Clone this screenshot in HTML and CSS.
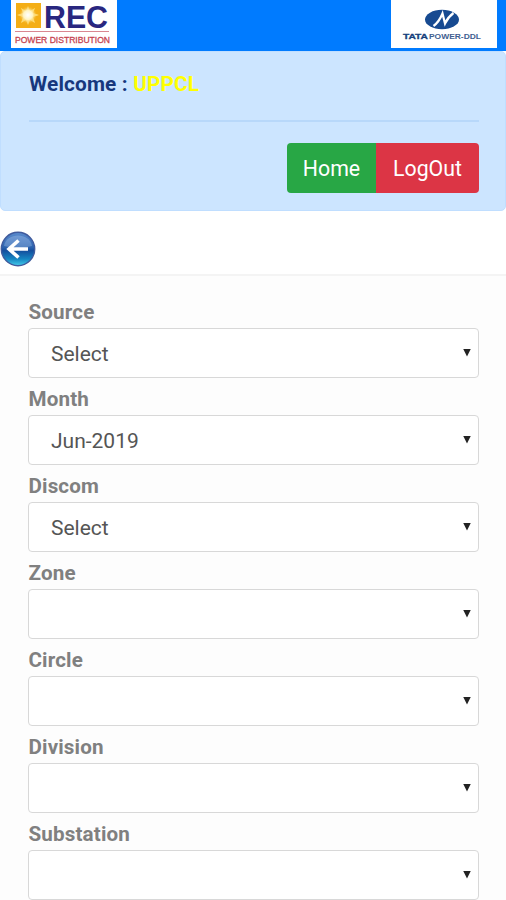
FILE: index.html
```html
<!DOCTYPE html>
<html lang="en">
<head>
<meta charset="utf-8">
<title>Power Distribution</title>
<link rel="stylesheet" href="styles.css">
</head>
<body>
<header class="topbar">
  <svg class="logo-rec" viewBox="0 0 106 48" role="img" aria-label="REC Power Distribution">
    <defs>
      <radialGradient id="sun"><stop offset="0" stop-color="#fff"/><stop offset=".5" stop-color="#fff4c4"/><stop offset="1" stop-color="#f5b824" stop-opacity="0"/></radialGradient>
    </defs>
    <rect width="106" height="48" fill="#fff"/>
    <rect x="5" y="3" width="25" height="25" fill="#f4ae16"/>
    <path d="M17 6l2 5 5-3-2 5 6 2-6 2 2 6-5-3-2 5-2-5-5 3 2-6-6-2 6-2-2-5 5 3z" fill="#ffe07e"/>
    <circle cx="17" cy="15" r="9" fill="url(#sun)"/>
    <text class="rec-name" x="33" y="27.500" textLength="64" lengthAdjust="spacingAndGlyphs">REC</text>
    <path d="M4 31.500h94" stroke="#d98791"/>
    <text class="rec-sub" x="4" y="42.500" textLength="95" lengthAdjust="spacingAndGlyphs">POWER DISTRIBUTION</text>
  </svg>
  <svg class="logo-tata" viewBox="0 0 106 48" role="img" aria-label="Tata Power-DDL">
    <rect width="106" height="48" fill="#fff"/>
    <ellipse cx="51" cy="19.500" rx="17" ry="9.700" fill="#174a91"/>
    <path d="M42.500 26Q48 22 51.500 13.500L54 23.500Q57 17 62.500 13" fill="none" stroke="#fff" stroke-width="2.200"/>
    <text class="tata-name" x="12" y="39" textLength="25" lengthAdjust="spacingAndGlyphs">TATA</text>
    <text class="tata-sub" x="38" y="39" textLength="52" lengthAdjust="spacingAndGlyphs">POWER-DDL</text>
  </svg>
</header>
<section class="welcome">
  <h1 class="greeting">Welcome : <span class="user">UPPCL</span></h1>
  <hr class="rule">
  <div class="actions">
    <button class="btn btn-home">Home</button><button class="btn btn-logout">LogOut</button>
  </div>
</section>
<nav class="back">
  <svg class="back-icon" viewBox="0 0 36 36" role="img" aria-label="Back">
    <defs>
      <linearGradient id="ball" x2="0" y2="1"><stop offset="0" stop-color="#5a8bcd"/><stop offset=".45" stop-color="#2b62ae"/><stop offset=".55" stop-color="#144e9d"/><stop offset=".8" stop-color="#1686c2"/><stop offset="1" stop-color="#45cbea"/></linearGradient>
    </defs>
    <circle cx="18" cy="18" r="16.700" fill="url(#ball)" stroke="#405b9d" stroke-width="1.400"/>
    <path d="M4 15C6 1 30 1 32 15Q18 19 4 15z" fill="#b6d1f3" opacity=".32"/>
    <path d="M18.500 9.500L9 18l9.500 8.500M10 18h18" fill="none" stroke="#fff" stroke-width="3.600"/>
  </svg>
</nav>
<main class="form">
  <label class="field"><span class="label">Source</span><span class="select"><span>Select</span><i class="caret"></i></span></label>
  <label class="field"><span class="label">Month</span><span class="select"><span>Jun-2019</span><i class="caret"></i></span></label>
  <label class="field"><span class="label">Discom</span><span class="select"><span>Select</span><i class="caret"></i></span></label>
  <label class="field"><span class="label">Zone</span><span class="select"><span></span><i class="caret"></i></span></label>
  <label class="field"><span class="label">Circle</span><span class="select"><span></span><i class="caret"></i></span></label>
  <label class="field"><span class="label">Division</span><span class="select"><span></span><i class="caret"></i></span></label>
  <label class="field"><span class="label">Substation</span><span class="select"><span></span><i class="caret"></i></span></label>
</main>
</body>
</html>
```
FILE: styles.css
```css
* { box-sizing: border-box; }
body { margin: 0; height: 900px; overflow: hidden; background: #fff; font-family: Roboto, sans-serif; }
.topbar { display: flex; justify-content: space-between; height: 51px; padding: 0 9px 0 11px; background: #007bff; }
.logo-rec, .logo-tata { display: block; width: 106px; height: 48px; }
.rec-name { font: bold 32px "Liberation Sans", sans-serif; fill: #29277f; }
.rec-sub { font: 9px "Liberation Sans", sans-serif; fill: #c6434f; stroke: #c6434f; stroke-width: .3px; }
.tata-name { font: bold 7.500px "Liberation Sans", sans-serif; fill: #163f7c; stroke: #163f7c; stroke-width: .3px; }
.tata-sub { font: bold 7px "Liberation Sans", sans-serif; fill: #3f6090; }
.welcome { height: 160px; padding: 19px 26px 0 28px; background: #cce5ff; border: 1px solid #c0deff; border-radius: 5px; }
.greeting { margin: 0; font-size: 20.800px; line-height: 27px; font-weight: 700; letter-spacing: .15px; color: #17377d; white-space: pre; }
.user { color: #ff0; }
.rule { height: 2px; margin: 22px 0 21px; border: 0; background: #b8d8fa; }
.actions { display: flex; justify-content: flex-end; }
.btn { height: 50px; padding: 0; border: 0; font: 400 21.300px Roboto, sans-serif; color: #fff; }
.btn-home { width: 89px; background: #28a745; border-radius: 4px 0 0 4px; }
.btn-logout { width: 103px; background: #dc3545; border-radius: 0 4px 4px 0; }
.back { height: 65px; padding-top: 20px; border-bottom: 2px solid #f4f4f4; }
.back-icon { display: block; width: 36px; height: 36px; }
.form { padding: 23px 27px 0 28px; background: #fdfdfd; height: 624px; }
.field { display: block; height: 87px; }
.label { display: block; height: 29px; padding-left: .5px; line-height: 27px; font-size: 20.600px; font-weight: 700; letter-spacing: .15px; color: #808080; }
.select { display: flex; justify-content: space-between; align-items: center; height: 50px; padding: 2px 7px 0 22px; border: 1px solid #d8d8d8; border-radius: 4px; background: #fff; font-size: 21px; line-height: 26px; color: #555; }
.caret { width: 8px; height: 8px; margin-bottom: 3px; background: #222; clip-path: polygon(0 0, 100% 0, 50% 100%); }
.back .back-icon { margin-top: 0; }
```
